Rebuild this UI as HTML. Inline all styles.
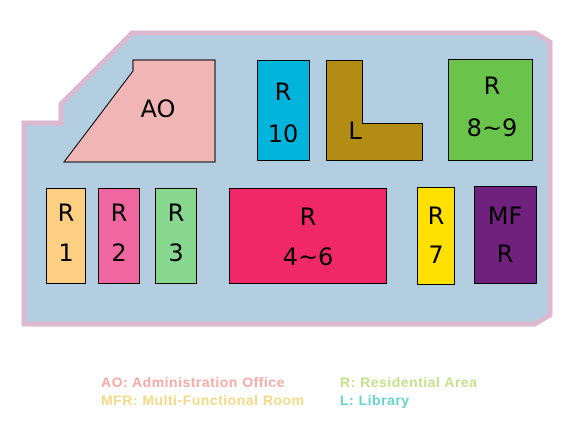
<!DOCTYPE html>
<html><head><style>
html,body{margin:0;padding:0;background:#fff;width:584px;height:434px;overflow:hidden}
svg text{font-family:"DejaVu Sans","Liberation Sans",sans-serif;font-size:24px;fill:#000;text-anchor:middle}
.lg{position:absolute;font-family:"Liberation Sans",sans-serif;font-weight:bold;font-size:14px;line-height:18px;white-space:nowrap;letter-spacing:0.5px}
</style></head><body>
<svg width="584" height="434" style="position:absolute;left:0;top:0">
<polygon points="24,123 61,123 61,104 132,33 535,33 550,42 550,315 535,324 24,324" fill="#b3cee1" stroke="#dcb9d0" stroke-width="5"/>
<polygon points="133,60 215,60 215,162 64,162 133,71" fill="#f0b6b6" stroke="#000" stroke-width="1"/>
<text x="158" y="117">AO</text>
<rect x="257.5" y="60.5" width="52" height="100" fill="#00b4dc" stroke="#000"/>
<text x="283" y="100">R</text><text x="283" y="142">10</text>
<polygon points="326.5,60.5 362.5,60.5 362.5,123.5 422.5,123.5 422.5,160.5 326.5,160.5" fill="#b38c14" stroke="#000"/>
<text x="355" y="139">L</text>
<rect x="448.5" y="59.5" width="84" height="101" fill="#6ac34a" stroke="#000"/>
<text x="492" y="94">R</text><text x="492" y="136">8~9</text>
<rect x="46.5" y="188.5" width="39" height="95" fill="#fccf82" stroke="#000"/>
<text x="66" y="221">R</text><text x="66" y="261">1</text>
<rect x="98.5" y="188.5" width="41" height="95" fill="#f066a0" stroke="#000"/>
<text x="119" y="221">R</text><text x="119" y="261">2</text>
<rect x="155.5" y="188.5" width="41" height="95" fill="#88d88f" stroke="#000"/>
<text x="176" y="221">R</text><text x="176" y="261">3</text>
<rect x="229.5" y="188.5" width="157" height="95" fill="#f0286a" stroke="#000"/>
<text x="308" y="225">R</text><text x="308" y="265">4~6</text>
<rect x="417.5" y="187.5" width="37" height="97" fill="#ffe000" stroke="#000"/>
<text x="436" y="224">R</text><text x="436" y="263">7</text>
<rect x="474.5" y="186.5" width="62" height="97" fill="#70217e" stroke="#000"/>
<text x="505" y="224">MF</text><text x="505" y="262">R</text>
</svg>
<div class="lg" style="left:101px;top:373px;color:#f9aaa6">AO: Administration Office</div>
<div class="lg" style="left:101px;top:391px;color:#f3da86">MFR: Multi-Functional Room</div>
<div class="lg" style="left:340px;top:373px;color:#c6e18c">R: Residential Area</div>
<div class="lg" style="left:340px;top:391px;color:#66d6cc">L: Library</div>
</body></html>
